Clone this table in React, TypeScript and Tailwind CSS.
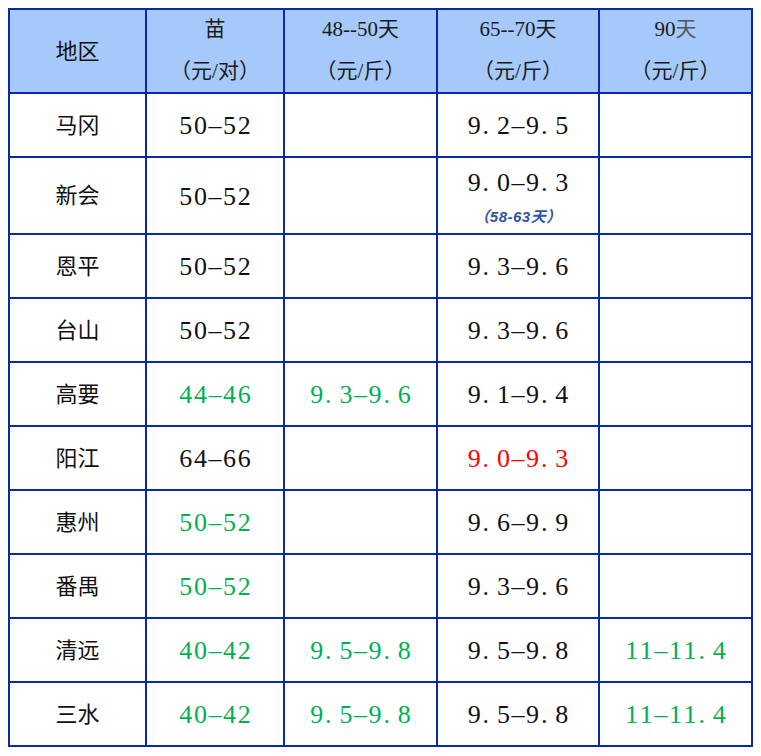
import React from "react";

type Tone = "black" | "green" | "red";

type Row = {
  region: string;
  seedling: string;
  seedlingTone: Tone;
  d48?: string;
  d65?: string;
  d65Tone?: Tone;
  d65Note?: string;
  d90?: string;
  tall?: boolean;
};

const rows: Row[] = [
  { region: "马冈", seedling: "50-52", seedlingTone: "black", d65: "9.2-9.5" },
  { region: "新会", seedling: "50-52", seedlingTone: "black", d65: "9.0-9.3", d65Note: "（58-63天）", tall: true },
  { region: "恩平", seedling: "50-52", seedlingTone: "black", d65: "9.3-9.6" },
  { region: "台山", seedling: "50-52", seedlingTone: "black", d65: "9.3-9.6" },
  { region: "高要", seedling: "44-46", seedlingTone: "green", d48: "9.3-9.6", d65: "9.1-9.4" },
  { region: "阳江", seedling: "64-66", seedlingTone: "black", d65: "9.0-9.3", d65Tone: "red" },
  { region: "惠州", seedling: "50-52", seedlingTone: "green", d65: "9.6-9.9" },
  { region: "番禺", seedling: "50-52", seedlingTone: "green", d65: "9.3-9.6" },
  { region: "清远", seedling: "40-42", seedlingTone: "green", d48: "9.5-9.8", d65: "9.5-9.8", d90: "11-11.4" },
  { region: "三水", seedling: "40-42", seedlingTone: "green", d48: "9.5-9.8", d65: "9.5-9.8", d90: "11-11.4" },
];

const toneClass: Record<Tone, string> = {
  black: "text-[#111]",
  green: "text-[#00b050]",
  red: "text-[#ff0000]",
};

// fixed-width glyph cells, like the Song typeface in the original sheet
function Num({ value, tone = "black" }: { value: string; tone?: Tone }) {
  return (
    <span className={`inline-flex pt-[2px] text-[26px] leading-none ${toneClass[tone]}`}>
      {value.split("").map((ch, i) => (
        <span key={i} className={`inline-block w-[14.6px] ${ch === "." ? "text-left pl-[1px]" : "text-center"}`}>
          {ch === "-" ? "–" : ch}
        </span>
      ))}
    </span>
  );
}

function Head({ top, bottom, dim }: { top: string; bottom: string; dim?: boolean }) {
  return (
    <div className="flex h-[82px] flex-col items-center justify-center gap-[18px] bg-[#a6c9fb] pb-[2px] text-[21px] leading-[24px] text-[#1a1a1a]">
      <span>
        {dim ? (
          <>
            {top.slice(0, -1)}
            <span className="text-[#555]">{top.slice(-1)}</span>
          </>
        ) : (
          top
        )}
      </span>
      <span>{bottom}</span>
    </div>
  );
}

export default function App() {
  return (
    <div className="min-h-screen bg-white pl-[8px] pt-[8px] font-[family-name:'Liberation_Serif','Noto_Sans_CJK_SC',serif]">
      <div className="grid w-fit grid-cols-[135px_136px_151px_160px_151px] gap-[2px] bg-[#0a28a8] p-[2px]">
        <div className="flex h-[82px] items-center justify-center bg-[#a6c9fb] text-[22px] text-[#111]">地区</div>
        <Head top="苗" bottom="（元/对）" />
        <Head top="48--50天" bottom="（元/斤）" />
        <Head top="65--70天" bottom="（元/斤）" />
        <Head top="90天" bottom="（元/斤）" dim />

        {rows.map((row) => {
          const h = row.tall ? "h-[75px]" : "h-[62px]";
          return (
            <React.Fragment key={row.region}>
              <div className={`flex ${h} items-center justify-center bg-white text-[22px] text-[#111]`}>{row.region}</div>
              <div className={`flex ${h} items-center justify-center bg-white`}>
                <Num value={row.seedling} tone={row.seedlingTone} />
              </div>
              <div className={`flex ${h} items-center justify-center bg-white`}>
                {row.d48 && <Num value={row.d48} tone="green" />}
              </div>
              <div className={`flex ${h} flex-col items-center justify-center bg-white`}>
                {row.d65 && <Num value={row.d65} tone={row.d65Tone} />}
                {row.d65Note && (
                  <span className="mt-[13px] font-[family-name:'Liberation_Sans','Noto_Sans_CJK_SC',sans-serif] text-[15px] font-bold italic leading-none tracking-[0.5px] text-[#2f55a4]">
                    {row.d65Note}
                  </span>
                )}
              </div>
              <div className={`flex ${h} items-center justify-center bg-white`}>
                {row.d90 && <Num value={row.d90} tone="green" />}
              </div>
            </React.Fragment>
          );
        })}
      </div>
    </div>
  );
}
